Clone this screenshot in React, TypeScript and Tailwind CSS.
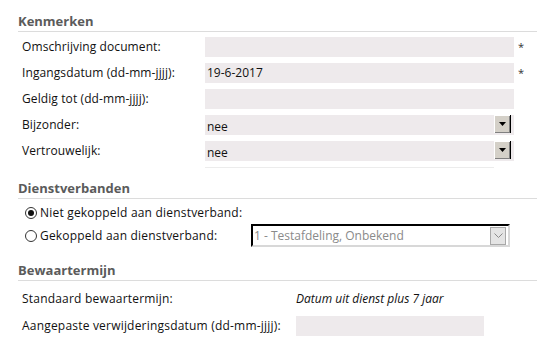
import React from 'react';

const font = { fontFamily: '"Open Sans", "Noto Sans", sans-serif' };

function SectionTitle({ children }: { children: React.ReactNode }) {
  return (
    <div className="ml-[18px] border-b border-[#dcdcdc] pb-[2px] text-[13px] font-bold leading-[16px] text-[#5b5b5b]">
      {children}
    </div>
  );
}

function DropButton() {
  return (
    <div className="flex h-[18px] w-[17px] items-center justify-center border-r border-r-black bg-[#d4d0c8] shadow-[inset_1px_1px_0_#fff,inset_-1px_-1px_0_#808080]">
      <svg width="7" height="4" viewBox="0 0 7 4">
        <path d="M0 0h7L3.5 4z" fill="#000" />
      </svg>
    </div>
  );
}

function FieldRow({
  label,
  value,
  required,
  select,
}: {
  label: string;
  value?: string;
  required?: boolean;
  select?: boolean;
}) {
  return (
    <div className="ml-[18px] flex h-[20px] items-center">
      <div className="w-[187px] pl-[4px] text-[12px] tracking-[0.1px] text-[#111]">{label}</div>
      <div className="relative flex h-[20px] w-[309px] items-center bg-[#eeeaec] pl-[2px] text-[12px] text-[#111]">
        <span className={select ? 'mt-[4px]' : ''}>{value}</span>
        {select && (
          <div className="absolute right-[3px] top-0">
            <DropButton />
          </div>
        )}
      </div>
      <div className="ml-[4px] w-[8px] text-[11px] text-[#333]">{required ? '*' : ''}</div>
    </div>
  );
}

function Radio({ checked, label }: { checked?: boolean; label: string }) {
  return (
    <div className="flex items-center gap-[3px] text-[12px] tracking-[0.2px] text-[#111]">
      <span className="flex h-[12px] w-[12px] items-center justify-center rounded-full border border-[#333] bg-white">
        {checked && <span className="h-[6px] w-[6px] rounded-full bg-[#111]" />}
      </span>
      <span>{label}</span>
    </div>
  );
}

export default function App() {
  return (
    <div className="h-[341px] w-[537px] overflow-hidden bg-white pt-[13px]" style={font}>
      <SectionTitle>Kenmerken</SectionTitle>
      <div className="mt-[5px] flex flex-col gap-[6px]">
        <FieldRow label="Omschrijving document:" required />
        <FieldRow label="Ingangsdatum (dd-mm-jjjj):" value="19-6-2017" required />
        <FieldRow label="Geldig tot (dd-mm-jjjj):" />
        <FieldRow label="Bijzonder:" value="nee" select />
        <FieldRow label="Vertrouwelijk:" value="nee" select />
      </div>
      <div className="ml-[205px] mt-[6px] h-px w-[289px] bg-[#ececec]" />

      <div className="mt-[12px]">
        <SectionTitle>Dienstverbanden</SectionTitle>
      </div>
      <div className="ml-[25px] mt-[6px] flex h-[16px] items-center">
        <Radio checked label="Niet gekoppeld aan dienstverband:" />
      </div>
      <div className="mt-[3px] flex items-center">
        <div className="ml-[25px] w-[226px]">
          <Radio label="Gekoppeld aan dienstverband:" />
        </div>
        <div className="flex h-[23px] w-[259px] items-center justify-between border-2 border-b-[#d8d8d8] border-l-black border-r-[#d8d8d8] border-t-black bg-white pl-[1px] pr-[2px] text-[12px] text-[#8a8a8a]">
          <span>1 - Testafdeling, Onbekend</span>
          <span className="flex h-[18px] w-[16px] items-center justify-center border border-[#a8a8a8] bg-[#e4e4e4]">
            <svg width="9" height="5" viewBox="0 0 9 5">
              <path d="M0.5 0.5L4.5 4.5L8.5 0.5" fill="none" stroke="#8a8a8a" strokeWidth="1" />
            </svg>
          </span>
        </div>
      </div>

      <div className="mt-[15px]">
        <SectionTitle>Bewaartermijn</SectionTitle>
      </div>
      <div className="mt-[8px] flex h-[20px] items-center text-[12px] tracking-[0.2px] text-[#111]">
        <div className="w-[296px] pl-[22px]">Standaard bewaartermijn:</div>
        <div className="italic tracking-normal">Datum uit dienst plus 7 jaar</div>
      </div>
      <div className="mt-[7px] flex h-[20px] items-center text-[12px] tracking-[0.2px] text-[#111]">
        <div className="w-[296px] pl-[22px]">Aangepaste verwijderingsdatum (dd-mm-jjjj):</div>
        <div className="h-[20px] w-[188px] bg-[#eeeaec]" />
      </div>
    </div>
  );
}
